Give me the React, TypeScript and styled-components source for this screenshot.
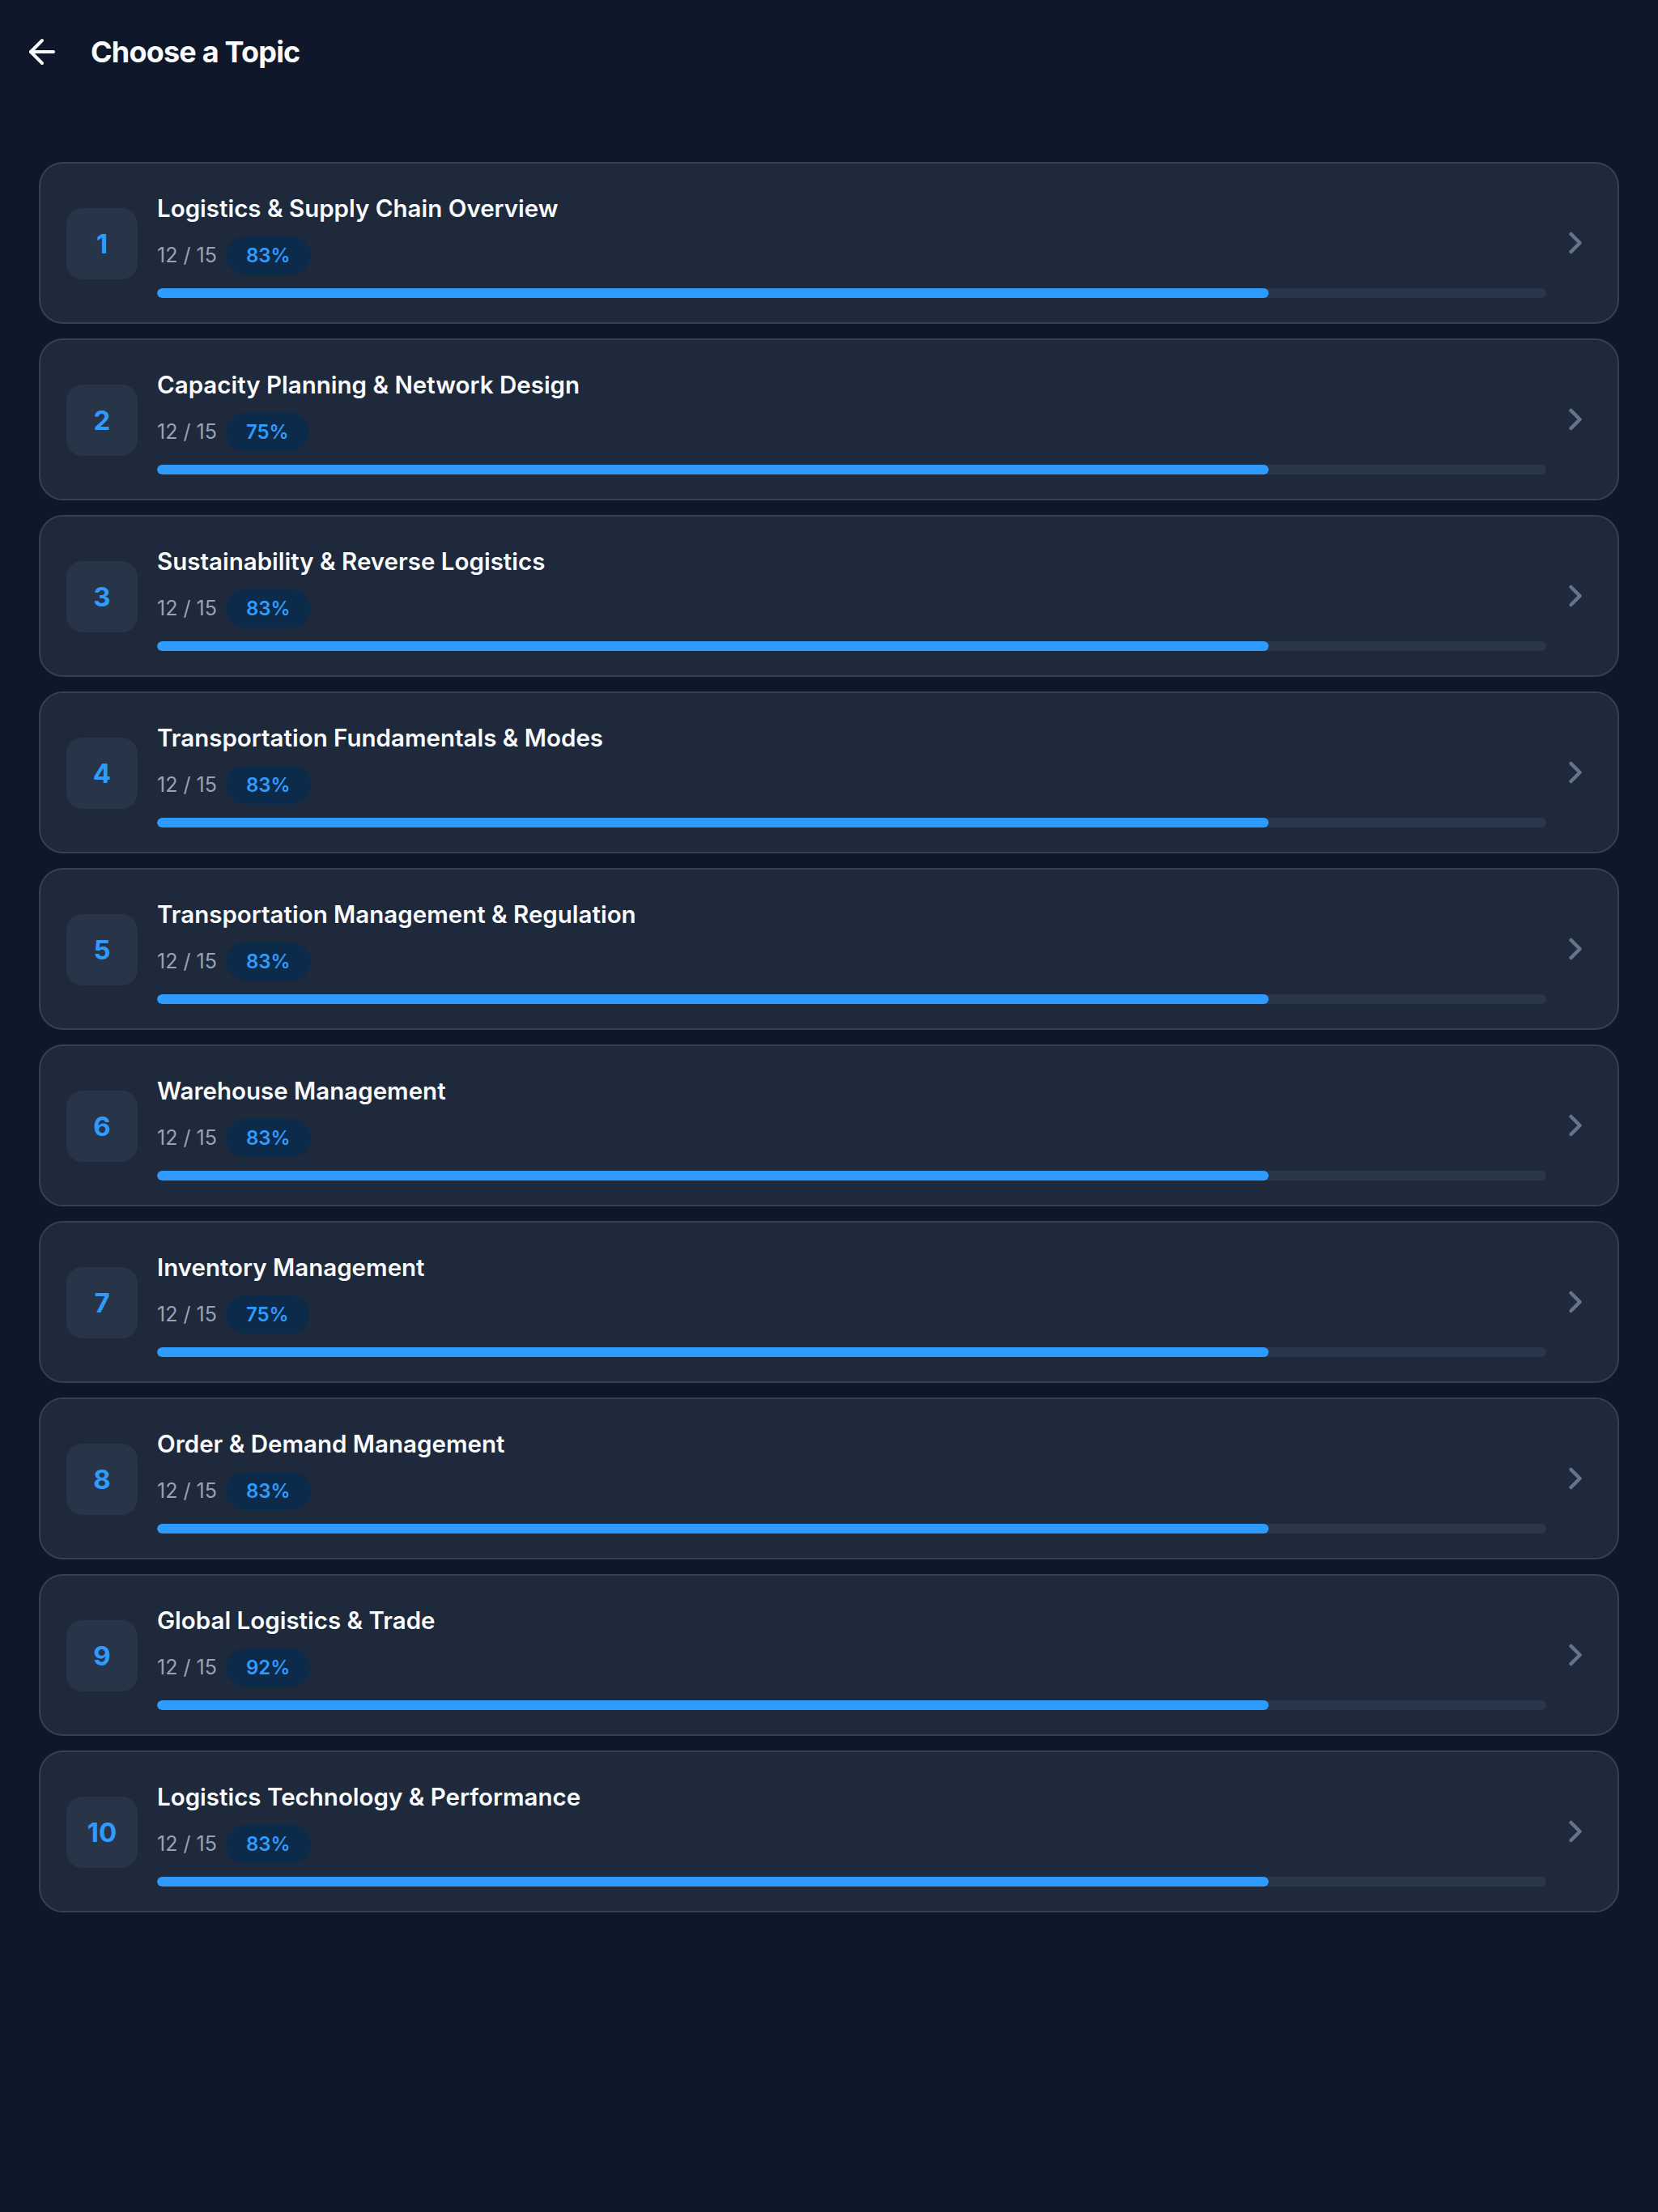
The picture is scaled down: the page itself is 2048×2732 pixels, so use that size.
import styled, { createGlobalStyle } from 'styled-components';
import { ArrowLeft, ChevronRight } from 'lucide-react';

const GlobalStyle = createGlobalStyle`
html, body {
  margin: 0;
  padding: 0;
  background: #0f172a;
}
body {
  font-family: Inter, "Noto Sans", "Liberation Sans", sans-serif;
  -webkit-font-smoothing: antialiased;
}
`;

const Page = styled.div`
min-height: 2732px;
background: #0f172a;
box-sizing: border-box;
`;

const Header = styled.header`
display: flex;
align-items: center;
gap: 36px;
height: 128px;
padding: 0 28px;
box-sizing: border-box;
`;

const BackButton = styled.button`
display: flex;
align-items: center;
justify-content: center;
width: 48px;
height: 48px;
padding: 0;
border: none;
background: transparent;
color: #f8fafc;
cursor: pointer;
`;

const Title = styled.h1`
margin: 0;
color: #f8fafc;
font-size: 36px;
font-weight: 700;
letter-spacing: -0.8px;
`;

const List = styled.div`
display: flex;
flex-direction: column;
gap: 18px;
padding: 72px 48px 0;
`;

const Card = styled.div`
display: flex;
align-items: center;
height: 200px;
box-sizing: border-box;
padding: 0 30px 0 32px;
background: #1e293b;
border: 2px solid #334155;
border-radius: 30px;
cursor: pointer;
`;

const Number = styled.div`
display: flex;
align-items: center;
justify-content: center;
flex-shrink: 0;
width: 88px;
height: 88px;
margin-top: 2px;
border-radius: 20px;
background: #283548;
color: #2f9bff;
font-size: 33px;
font-weight: 700;
`;

const Body = styled.div`
display: flex;
flex-direction: column;
gap: 17px;
flex: 1;
margin: 6px 14px 0 24px;
`;

const TopicName = styled.div`
color: #f8fafc;
font-size: 29.5px;
font-weight: 600;
line-height: 36px;
`;

const Meta = styled.div`
display: flex;
align-items: center;
gap: 11px;
`;

const Count = styled.span`
color: #94a3b8;
font-size: 25px;
`;

const Badge = styled.span`
display: flex;
align-items: center;
height: 47px;
padding: 0 25px;
border-radius: 24px;
background: #0c2a49;
color: #2f9bff;
font-size: 24px;
font-weight: 600;
`;

const Track = styled.div`
height: 12px;
border-radius: 6px;
background: #2a3649;
overflow: hidden;
`;

const Fill = styled.div`
height: 100%;
border-radius: 6px;
background: #2f9bff;
`;

const Arrow = styled.div`
display: flex;
flex-shrink: 0;
color: #64748b;
`;

const topics = [
  { name: 'Logistics & Supply Chain Overview', score: 83 },
  { name: 'Capacity Planning & Network Design', score: 75 },
  { name: 'Sustainability & Reverse Logistics', score: 83 },
  { name: 'Transportation Fundamentals & Modes', score: 83 },
  { name: 'Transportation Management & Regulation', score: 83 },
  { name: 'Warehouse Management', score: 83 },
  { name: 'Inventory Management', score: 75 },
  { name: 'Order & Demand Management', score: 83 },
  { name: 'Global Logistics & Trade', score: 92 },
  { name: 'Logistics Technology & Performance', score: 83 },
];

const App = () => {
  return (
    <Page>
      <GlobalStyle />
      <Header>
        <BackButton aria-label="Back">
          <ArrowLeft size={48} strokeWidth={2} />
        </BackButton>
        <Title>Choose a Topic</Title>
      </Header>
      <List>
        {topics.map((t, i) => {
          const done = 12;
          const total = 15;
          return (
            <Card key={t.name}>
              <Number>{i + 1}</Number>
              <Body>
                <TopicName>{t.name}</TopicName>
                <Meta>
                  <Count>{done} / {total}</Count>
                  <Badge>{t.score}%</Badge>
                </Meta>
                <Track>
                  <Fill style={{ width: `${(done / total) * 100}%` }} />
                </Track>
              </Body>
              <Arrow>
                <ChevronRight size={44} strokeWidth={2.5} />
              </Arrow>
            </Card>
          );
        })}
      </List>
    </Page>
  );
};

export default App;
